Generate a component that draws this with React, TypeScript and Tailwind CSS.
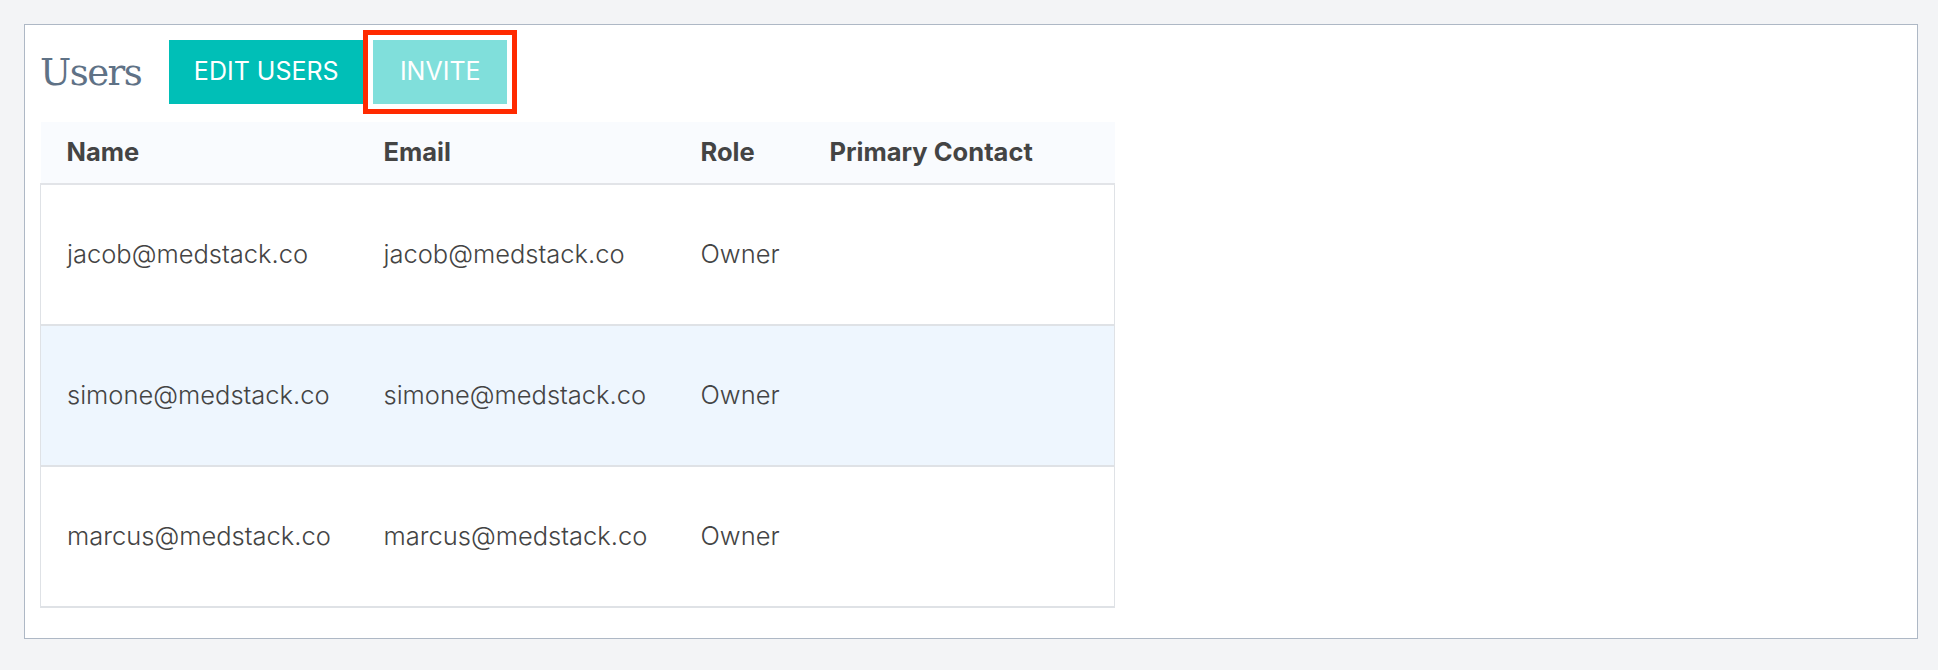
import React from 'react';

const users = [
  { name: 'jacob@medstack.co', email: 'jacob@medstack.co', role: 'Owner' },
  { name: 'simone@medstack.co', email: 'simone@medstack.co', role: 'Owner' },
  { name: 'marcus@medstack.co', email: 'marcus@medstack.co', role: 'Owner' },
];

export default function App() {
  return (
    <div className="min-h-[670px] bg-[#f3f4f6] pl-[24px] pr-[20px] pt-[24px] font-['Inter',sans-serif]">
      <div className="h-[615px] border border-[#aeb8c5] bg-white pl-[15px] pt-[15px]">
        {/* Title row */}
        <div className="flex items-center">
          <h1 className="font-['DejaVu_Serif',serif] text-[37px] leading-none tracking-[-1.5px] text-[#5f7286]">
            Users
          </h1>
          <button className="ml-[28px] h-[64px] w-[194px] bg-[#00bfb7] text-[25px] text-white">
            EDIT USERS
          </button>
          <button className="relative ml-[10px] h-[64px] w-[134px] bg-[#80dfdb] text-[25px] text-white">
            INVITE
            <span className="pointer-events-none absolute -inset-[10px] border-[5px] border-[#ff2a00]" />
          </button>
        </div>

        {/* Users table */}
        <table className="mt-[18px] w-[1074px] table-fixed border-collapse text-left text-[25.5px] text-[#444]">
          <colgroup>
            <col className="w-[317px]" />
            <col className="w-[317px]" />
            <col className="w-[129px]" />
            <col className="w-[311px]" />
          </colgroup>
          <thead>
            <tr className="h-[62px] bg-[#f9fbfe] border-b-2 border-[#e2e4e8]">
              <th className="pl-[26px] font-bold">Name</th>
              <th className="pl-[26px] font-bold">Email</th>
              <th className="pl-[26px] font-bold">Role</th>
              <th className="pl-[26px] font-bold">Primary Contact</th>
            </tr>
          </thead>
          <tbody>
            {users.map((u, i) => (
              <tr
                key={u.name}
                className={`h-[141px] border-x border-b-2 border-[#dfe2e6] ${i === 1 ? 'bg-[#eef6fe]' : 'bg-white'}`}
              >
                <td className="pl-[26px] font-light">{u.name}</td>
                <td className="pl-[26px] font-light">{u.email}</td>
                <td className="pl-[26px] font-light">{u.role}</td>
                <td className="pl-[26px]"></td>
              </tr>
            ))}
          </tbody>
        </table>
      </div>
    </div>
  );
}
